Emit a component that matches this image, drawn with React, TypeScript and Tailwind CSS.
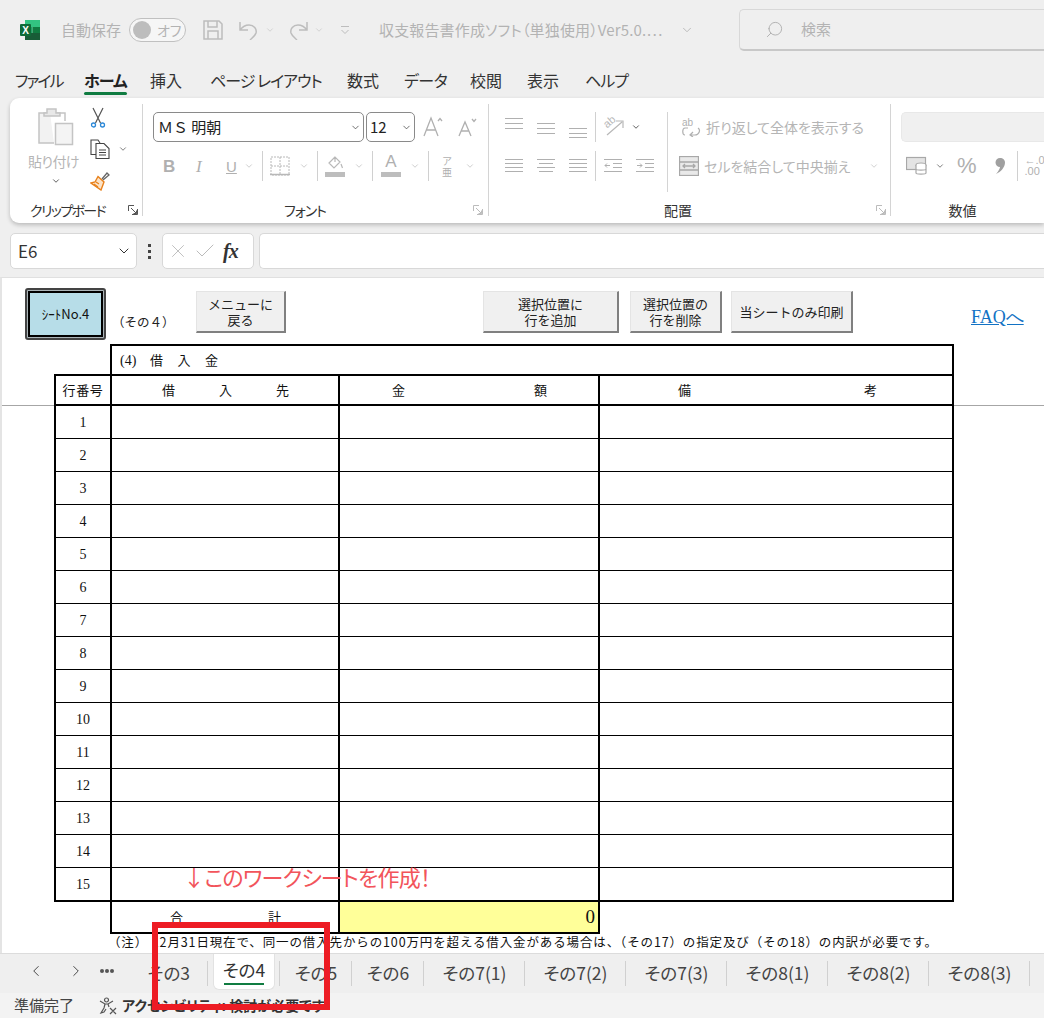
import type { ReactNode } from 'react'
import { ChevronDown, Search, X, Check, ChevronLeft, ChevronRight } from 'lucide-react'

const ROWS = Array.from({ length: 15 }, (_, i) => i + 1)
const TABS = [
  { label: 'その5', width: 'w-[72px]' },
  { label: 'その6', width: 'w-[72px]' },
  { label: 'その7(1)', width: 'w-[101px]' },
  { label: 'その7(2)', width: 'w-[101px]' },
  { label: 'その7(3)', width: 'w-[101px]' },
  { label: 'その8(1)', width: 'w-[101px]' },
  { label: 'その8(2)', width: 'w-[101px]' },
  { label: 'その8(3)', width: 'w-[101px]' },
]

function Chev({ className = 'text-[#b5b5b5]', size = 10 }: { className?: string; size?: number }) {
  return <ChevronDown size={size} strokeWidth={1.5} className={`shrink-0 ${className}`} />
}

function Lines({ y, widths, className = '' }: { y: number[]; widths?: number[]; className?: string }) {
  return (
    <svg width="18" height="18" viewBox="0 0 18 18" className={`shrink-0 ${className}`} stroke="#b0b0b0" strokeWidth="1">
      {y.map((v, i) => (
        <line key={v} x1={widths ? (18 - widths[i]) / 2 : 0} x2={widths ? (18 + widths[i]) / 2 : 18} y1={v + 0.5} y2={v + 0.5} />
      ))}
    </svg>
  )
}

function ExcelLogo() {
  return (
    <svg width="20" height="20" viewBox="0 0 20 20" className="shrink-0">
      <rect x="5" y="0" width="15" height="7" fill="#33c481" />
      <rect x="5" y="7" width="7.5" height="6" fill="#21a366" />
      <rect x="12.5" y="7" width="7.5" height="6" fill="#107c41" />
      <rect x="5" y="13" width="15" height="7" fill="#185c37" />
      <rect x="0" y="4" width="11" height="12" rx="1" fill="#0e6b38" />
      <text x="5.5" y="13.5" fontSize="10" fontWeight="700" fill="#fff" textAnchor="middle" fontFamily="Liberation Sans">X</text>
    </svg>
  )
}

function PasteIcon() {
  return (
    <svg width="36" height="38" viewBox="0 0 36 38" className="shrink-0" fill="none" stroke="#c4c4c4" strokeWidth="1.5">
      <path d="M12 5H1v30h15" fill="#f2f2f2" />
      <path d="M27 13V5H16" />
      <path d="M9 5V1h9v4h4v3H6V5z" fill="#e8e8e8" />
      <rect x="17.5" y="15.5" width="17" height="21" fill="#f4f4f4" />
    </svg>
  )
}

function ScissorsIcon() {
  return (
    <svg width="16" height="21" viewBox="0 0 16 21" className="shrink-0" fill="none">
      <path d="M3 1l7.5 15M13 1L5.500 16" stroke="#555" strokeWidth="1.200" />
      <circle cx="3.500" cy="18" r="2" stroke="#2b88d8" strokeWidth="1.300" />
      <circle cx="12.500" cy="18" r="2" stroke="#2b88d8" strokeWidth="1.300" />
    </svg>
  )
}

function CopyIcon() {
  return (
    <svg width="20" height="20" viewBox="0 0 20 20" className="shrink-0" fill="none" stroke="#444" strokeWidth="1.100">
      <path d="M8 15.500H1V1h7l2 3" />
      <path d="M6 4.500h8l5 5v10H6z" fill="#fff" />
      <path d="M9 11h7M9 13.500h7M9 16h7" />
    </svg>
  )
}

function BrushIcon() {
  return (
    <svg width="20" height="20" viewBox="0 0 20 20" className="shrink-0" fill="none">
      <path d="M12 8l5-6 2 2-6 5" stroke="#666" strokeWidth="1.300" />
      <path d="M8 5.500l6 5.500-3 8-10-7 4-1z" fill="#fbe3c8" stroke="#e8801a" strokeWidth="1.400" />
      <path d="M6 11l3 2M4 13l4 3" stroke="#e8801a" strokeWidth="1.200" />
    </svg>
  )
}

function Launcher({ dark = false }: { dark?: boolean }) {
  const color = dark ? '#555' : '#bcbcbc'
  return (
    <svg width="10" height="10" viewBox="0 0 10 10" className="shrink-0" fill="none" stroke={color} strokeWidth="1">
      <path d="M9.500 4V9.500H4M.5 6V.5H6M3 3l5.500 5.500M5.500 8.500h3v-3" />
    </svg>
  )
}

function RibbonLabel({ children, className = '' }: { children: ReactNode; className?: string }) {
  return <div className={`text-[14px] leading-[20px] h-[20px] text-[#333] whitespace-nowrap ${className}`}>{children}</div>
}

function Sep({ className = '' }: { className?: string }) {
  return <div className={`w-px h-[30px] bg-[#d0d0d0] shrink-0 ${className}`} />
}

function GrowA({ big, up }: { big: boolean; up: boolean }) {
  return (
    <svg width="20" height="22" viewBox="0 0 20 22" className="shrink-0" fill="none" stroke="#b0b0b0" strokeWidth="1.300">
      {big ? <path d="M1 20L8 2l7 18M3.500 14h9" /> : <path d="M2 20L8 6l6 14M4 15h8" />}
      <path d={up ? 'M15 5l2-2.500L19 5' : 'M15 3l2 2.500L19 3'} />
    </svg>
  )
}

function TitleBar() {
  return (
    <div className="flex items-center h-[60px] pl-[20px] text-[15px] text-[#b3b3b3]">
      <ExcelLogo />
      <span className="ml-[21px] w-[59px] whitespace-nowrap">自動保存</span>
      <div className="ml-[9px] w-[57px] h-[24px] rounded-full border border-[#c0c0c0] bg-[#f6f6f6] flex items-center pl-[3px]">
        <span className="w-[18px] h-[18px] rounded-full bg-[#bdbdbd]" />
        <span className="ml-[6px] text-[14px] leading-none whitespace-nowrap">オフ</span>
      </div>
      <svg width="20" height="20" viewBox="0 0 20 20" className="ml-[17px] shrink-0" fill="none" stroke="#bdbdbd" strokeWidth="1.500">
        <path d="M1 1h15l3 3v15H1z" />
        <path d="M5 1v6h9V1M5 19v-8h10v8" />
      </svg>
      <svg width="19" height="20" viewBox="0 0 19 20" className="ml-[16px] shrink-0" fill="none" stroke="#bdbdbd" strokeWidth="1.500">
        <path d="M1 2v8h8M1 10c3-4 6-5 9-5 5 0 8 4 7 8-1 3-4 5-6 7" />
      </svg>
      <Chev className="ml-[7px] text-[#c0c0c0]" />
      <svg width="19" height="20" viewBox="0 0 19 20" className="ml-[14px] shrink-0" fill="none" stroke="#bdbdbd" strokeWidth="1.500">
        <path d="M18 2v8h-8M18 10c-3-4-6-5-9-5-5 0-8 4-7 8 1 3 4 5 6 7" />
      </svg>
      <Chev className="ml-[6px] text-[#c0c0c0]" />
      <svg width="10" height="10" viewBox="0 0 10 10" className="ml-[16px] shrink-0" fill="none" stroke="#bdbdbd">
        <path d="M1 1.500h8M1.500 5l3.500 3.500L8.500 5" />
      </svg>
      <span className="ml-[29px] w-[288px] shrink-0 whitespace-nowrap tracking-[0.15px]">収支報告書作成ソフト（単独使用）Ver5.0.⋯</span>
      <Chev size={14} className="ml-[13px]" />
      <div className="ml-[45px] flex-1 h-[42px] rounded-l-[5px] border border-r-0 border-[#d8d8d8] border-b-[2px] border-b-[#c8c8c8] flex items-center pl-[25px]">
        <Search size={19} strokeWidth={1.200} className="-scale-x-100 text-[#b0b0b0]" />
        <span className="ml-[17px]">検索</span>
      </div>
    </div>
  )
}

function MenuBar() {
  const items = [
    { label: 'ファイル', cls: 'w-[69px] tracking-[-2px]' },
    { label: 'ホーム', cls: 'w-[66px] font-bold text-[#222] tracking-[-1px]', active: true },
    { label: '挿入', cls: 'w-[60px]' },
    { label: 'ページ レイアウト', cls: 'w-[137px] tracking-[-1px]' },
    { label: '数式', cls: 'w-[57px]' },
    { label: 'データ', cls: 'w-[66px] tracking-[-0.5px]' },
    { label: '校閲', cls: 'w-[57px]' },
    { label: '表示', cls: 'w-[58px]' },
    { label: 'ヘルプ', cls: 'w-[60px] tracking-[-1px]' },
  ]
  return (
    <div className="flex h-[38px] pl-[15px] text-[16px] text-[#333]">
      {items.map((m) => (
        <div key={m.label} className={`h-[38px] pt-[8px] leading-[24px] whitespace-nowrap ${m.cls}`}>
          <span className="relative inline-block h-[30px]">
            {m.label}
            {m.active && <span className="absolute left-0 right-0 top-[24px] h-[3px] rounded-sm bg-[#107c41]" />}
          </span>
        </div>
      ))}
    </div>
  )
}

function ClipboardGroup() {
  return (
    <div className="w-[133px] shrink-0 border-r border-[#d4d4d4] h-[112px]">
      <div className="flex h-[96px] pl-[17px]">
        <div className="w-[63px] flex flex-col items-center pt-[4px] pr-[5px]">
          <PasteIcon />
          <span className="mt-[6px] -ml-[5px] text-[14px] leading-[18px] text-[#b5b5b5] whitespace-nowrap tracking-[-0.6px]">貼り付け</span>
          <Chev className="mt-[6px]" />
        </div>
        <div className="flex flex-col items-start pt-[3px]">
          <ScissorsIcon />
          <div className="flex items-center mt-[11px]">
            <CopyIcon />
            <Chev className="ml-[8px] text-[#333]" />
          </div>
          <div className="mt-[12px]"><BrushIcon /></div>
        </div>
      </div>
      <div className="flex items-center pl-[20px]">
        <div className="w-[98px]"><RibbonLabel className="tracking-[-1.6px]">クリップボード</RibbonLabel></div>
        <Launcher dark />
      </div>
    </div>
  )
}

function FontGroup() {
  return (
    <div className="w-[346px] shrink-0 border-r border-[#d4d4d4] h-[112px]">
      <div className="h-[96px] pt-[8px]">
        <div className="flex items-center pl-[10px] h-[30px]">
          <div className="w-[211px] h-[30px] rounded-[5px] border border-[#8a8a8a] flex items-center pl-[4px] pr-[2px] justify-between text-[15px] text-[#222]">
            <span className="whitespace-nowrap [font-feature-settings:normal]">ＭＳ 明朝</span>
            <Chev size={11} className="text-[#333]" />
          </div>
          <div className="ml-[2px] w-[49px] h-[30px] rounded-[5px] border border-[#8a8a8a] flex items-center pl-[3px] pr-[2px] justify-between text-[15px] text-[#222]">
            <span>12</span>
            <Chev size={11} className="text-[#333]" />
          </div>
          <div className="ml-[8px]"><GrowA big up /></div>
          <div className="ml-[14px]"><GrowA big={false} up={false} /></div>
        </div>
        <div className="flex items-center h-[32px] mt-[8px] pl-[20px] text-[#b0b0b0]">
          <span className="w-[12px] text-[17px] font-bold leading-none font-['Liberation_Sans']">B</span>
          <span className="ml-[21px] w-[10px] text-[17px] italic leading-none font-['Liberation_Serif']">I</span>
          <span className="ml-[20px] w-[12px] text-[15px] underline leading-none font-['Liberation_Sans']">U</span>
          <Chev className="ml-[6px]" />
          <Sep className="ml-[8px]" />
          <svg width="20" height="20" viewBox="0 0 20 20" className="ml-[7px] shrink-0" fill="none" stroke="#b8b8b8">
            <rect x="1" y="1" width="18" height="18" strokeDasharray="2 1" />
            <path d="M10 1v18M1 10h18" strokeDasharray="2 1" />
            <path d="M0 18.500h20" strokeWidth="1.500" />
          </svg>
          <Chev className="ml-[9px]" />
          <Sep className="ml-[8px]" />
          <div className="ml-[7px] w-[20px] flex flex-col items-center">
            <svg width="18" height="14" viewBox="0 0 18 14" fill="none" stroke="#b8b8b8" strokeWidth="1.200">
              <path d="M9 1L3 7l5 5 6-6zM9 1V6M15 8l1.500 4" />
            </svg>
            <span className="mt-[2px] w-[20px] h-[5px] bg-[#bdbdbd]" />
          </div>
          <Chev className="ml-[9px]" />
          <Sep className="ml-[8px]" />
          <div className="ml-[8px] w-[20px] flex flex-col items-center">
            <span className="text-[17px] leading-[14px] font-['Liberation_Sans']">A</span>
            <span className="mt-[3px] w-[20px] h-[5px] bg-[#bdbdbd]" />
          </div>
          <Chev className="ml-[9px]" />
          <Sep className="ml-[8px]" />
          <div className="ml-[12px] w-[12px] flex flex-col items-center text-[10px] leading-[11px] whitespace-nowrap">
            <span>ア</span>
            <span>亜</span>
          </div>
          <Chev className="ml-[12px]" />
        </div>
      </div>
      <div className="flex items-center">
        <div className="w-[324px] text-center"><RibbonLabel className="tracking-[-1px]">フォント</RibbonLabel></div>
        <div className="ml-[6px]"><Launcher /></div>
      </div>
    </div>
  )
}

function AlignGroup() {
  return (
    <div className="w-[402px] shrink-0 border-r border-[#d4d4d4] h-[112px]">
      <div className="flex h-[96px] pt-[8px]">
        <div className="w-[179px] h-[80px] border-r border-[#d4d4d4] pl-[16px]">
          <div className="flex items-center h-[30px]">
            <Lines y={[4, 9, 14]} className="-mt-[8px]" />
            <Lines y={[6, 11, 16]} className="ml-[14px] -mt-[2px]" />
            <Lines y={[8, 13, 17]} className="ml-[14px] mt-[4px]" />
            <Sep className="ml-[8px]" />
            <svg width="22" height="24" viewBox="0 0 22 24" className="ml-[7px] shrink-0" fill="none" stroke="#b8b8b8" strokeWidth="1.200">
              <path d="M4 20L19 7M13 6h7v7" />
              <text x="1" y="11" fontSize="11" fill="#b8b8b8" stroke="none" transform="rotate(-40 6 8)" fontFamily="Liberation Sans">ab</text>
            </svg>
            <Chev className="ml-[6px]" />
          </div>
          <div className="flex items-center h-[32px] mt-[8px]">
            <Lines y={[2, 6, 10, 14]} />
            <Lines y={[2, 6, 10, 14]} widths={[18, 14, 18, 14]} className="ml-[14px]" />
            <Lines y={[2, 6, 10, 14]} className="ml-[14px]" />
            <Sep className="ml-[8px]" />
            <svg width="18" height="18" viewBox="0 0 18 18" className="ml-[8px] shrink-0" fill="none" stroke="#b0b0b0">
              <path d="M0 2.500h18M9 6.500h9M9 10.500h9M0 14.500h18M6 8.500H1M3 6.500l-2 2 2 2" />
            </svg>
            <svg width="18" height="18" viewBox="0 0 18 18" className="ml-[14px] shrink-0" fill="none" stroke="#b0b0b0">
              <path d="M0 2.500h18M9 6.500h9M9 10.500h9M0 14.500h18M1 8.500h5M4 6.500l2 2-2 2" />
            </svg>
          </div>
        </div>
        <div className="pl-[11px] text-[14px] text-[#b5b5b5]">
          <div className="flex items-center h-[30px]">
            <svg width="22" height="20" viewBox="0 0 22 20" className="shrink-0 ml-[2px]" fill="none" stroke="#b0b0b0" strokeWidth="1.200">
              <text x="1" y="9" fontSize="10" fill="#b0b0b0" stroke="none" fontFamily="Liberation Sans">ab</text>
              <path d="M7 11H4C1 11 1 18 4 18M17 11c3 2 1 7-3 7H9M12 15l-3 3 3 2" />
            </svg>
            <span className="ml-[3px] whitespace-nowrap">折り返して全体を表示する</span>
          </div>
          <div className="flex items-center h-[32px] mt-[8px]">
            <svg width="20" height="20" viewBox="0 0 20 20" className="shrink-0" fill="none" stroke="#a8a8a8" strokeWidth="1.300">
              <rect x=".5" y=".5" width="19" height="19" fill="#e9e9e9" />
              <path d="M.5 6h19M.5 14h19" />
              <path d="M4 10h12M6 8l-2 2 2 2M14 8l2 2-2 2" />
            </svg>
            <span className="ml-[5px] w-[165px] shrink-0 whitespace-nowrap">セルを結合して中央揃え</span>
            <Chev />
          </div>
        </div>
      </div>
      <div className="flex items-center">
        <div className="w-[378px] text-center"><RibbonLabel>配置</RibbonLabel></div>
        <div className="ml-[9px]"><Launcher /></div>
      </div>
    </div>
  )
}

function NumberGroup() {
  return (
    <div className="flex-1 h-[112px]">
      <div className="h-[96px] pt-[8px] pl-[10px]">
        <div className="h-[30px] rounded-l-[5px] bg-[#f0f0f0] border border-r-0 border-[#e8e8e8]" />
        <div className="flex items-center h-[32px] mt-[8px] pl-[5px] text-[#b0b0b0]">
          <svg width="21" height="20" viewBox="0 0 21 20" className="shrink-0" fill="none" stroke="#a8a8a8" strokeWidth="1.200">
            <rect x=".5" y="1.500" width="19" height="12" fill="#e4e4e4" />
            <ellipse cx="15" cy="9" rx="5" ry="2" fill="#fff" />
            <path d="M10 9v8c0 1.500 10 1.500 10 0V9M10 13c0 1.500 10 1.500 10 0" fill="#fff" />
          </svg>
          <Chev className="ml-[8px] text-[#333]" />
          <span className="ml-[12px] text-[22px] leading-none font-['Liberation_Sans']">%</span>
          <svg width="10" height="16" viewBox="0 0 10 16" className="ml-[18px] shrink-0">
            <path d="M5 0c3 0 5 2 5 4.500C10 9 6 14 1 16c2-2.500 4-5 4-7C2.500 9 .5 7 .5 4.500S2.500 0 5 0z" fill="#a0a0a0" />
          </svg>
          <Sep className="ml-[12px]" />
          <div className="ml-[7px] w-[20px] text-[11px] leading-[11px] whitespace-nowrap font-['Liberation_Sans']">
            <div>←.0</div>
            <div>.00</div>
          </div>
        </div>
      </div>
      <div className="w-[143px] text-center"><RibbonLabel>数値</RibbonLabel></div>
    </div>
  )
}

function FormulaBar() {
  return (
    <div className="flex items-stretch h-[36px] mt-[10px] pl-[10px]">
      <div className="w-[127px] rounded-[5px] border border-[#d8d8d8] bg-white flex items-center justify-between pl-[7px] pr-[4px] text-[17px] text-[#333]">
        <span>E6</span>
        <ChevronDown size={16} strokeWidth={1.500} className="text-[#333]" />
      </div>
      <div className="w-[25px] flex flex-col items-center justify-center gap-[3px]">
        <span className="w-[3px] h-[3px] bg-[#444]" />
        <span className="w-[3px] h-[3px] bg-[#444]" />
        <span className="w-[3px] h-[3px] bg-[#444]" />
      </div>
      <div className="w-[92px] rounded-[5px] border border-[#d8d8d8] bg-white flex items-center pl-[4px]">
        <X size={22} strokeWidth={1} className="text-[#bbb]" />
        <Check size={24} strokeWidth={1} className="ml-[4px] text-[#bbb]" />
        <span className="ml-[6px] text-[20px] italic font-bold font-['Liberation_Serif'] text-[#333] tracking-[-1px]">fx</span>
      </div>
      <div className="ml-[5px] flex-1 rounded-l-[5px] border border-r-0 border-[#d8d8d8] bg-white" />
    </div>
  )
}

function SheetButton({ children, className }: { children: ReactNode; className: string }) {
  return (
    <div className={`h-[42px] shrink-0 bg-[#f0f0f0] border-r-2 border-b-2 border-r-[#808080] border-b-[#808080] border-t border-l border-t-[#e4e4e4] border-l-[#e4e4e4] flex flex-col items-center justify-center text-[13px] leading-[16px] text-[#222] ${className}`}>
      {children}
    </div>
  )
}

function SheetHeader() {
  return (
    <div className="flex items-start h-[66px] pt-[10px] pl-[25px]">
      <div className="w-[81px] h-[52px] shrink-0 rounded-[3px] border-2 border-[#444] bg-[#aab4b8] p-[1px]">
        <div className="h-full border-2 border-black bg-[#b7dde8] flex items-center justify-center text-[13px] text-[#111] whitespace-nowrap">
          ｼｰﾄNo.4
        </div>
      </div>
      <span className="ml-[6px] mt-[25px] w-[84px] shrink-0 text-[12.500px] leading-[18px] text-[#222] whitespace-nowrap">（その４）</span>
      <SheetButton className="w-[90px] mt-[3px]"><span>メニューに</span><span>戻る</span></SheetButton>
      <SheetButton className="w-[136px] mt-[3px] ml-[197px]"><span>選択位置に</span><span>行を追加</span></SheetButton>
      <SheetButton className="w-[92px] mt-[3px] ml-[11px]"><span>選択位置の</span><span>行を削除</span></SheetButton>
      <SheetButton className="w-[122px] mt-[3px] ml-[9px]"><span>当シートのみ印刷</span></SheetButton>
      <a className="ml-[118px] mt-[18px] text-[18px] leading-[22px] text-[#1272c4] underline font-['Liberation_Serif'] whitespace-nowrap">FAQへ</a>
    </div>
  )
}

function LedgerTable() {
  const cell = 'border-l-2 border-black'
  return (
    <div className="relative ml-[54px] w-[900px] grid grid-cols-[56px_228px_260px_356px] grid-rows-[30px_30px_34px_repeat(14,33px)_34px] text-[13px] text-[#111]">
      <div />
      <div className={`col-span-3 ${cell} border-t-2 border-r-2 flex items-center pl-[8px] whitespace-nowrap`}>
        <span className="font-['Liberation_Serif'] text-[14px] w-[30px]">(4)</span>
        <span className="tracking-[14.5px]">借入金</span>
      </div>

      <div className={`${cell} border-t-2 flex items-center justify-center tracking-[0.6px]`}>行番号</div>
      <div className={`${cell} border-t-2 flex items-center justify-between pl-[50px] pr-[49px]`}>
        <span>借</span><span>入</span><span>先</span>
      </div>
      <div className={`${cell} border-t-2 flex items-center justify-between pl-[52px] pr-[51px]`}>
        <span>金</span><span>額</span>
      </div>
      <div className={`${cell} border-t-2 border-r-2 flex items-center justify-between pl-[78px] pr-[75px]`}>
        <span>備</span><span>考</span>
      </div>

      {ROWS.map((n) => (
        <div key={n} className="contents">
          <div className={`${cell} ${n === 1 ? 'border-t-2' : 'border-t'} flex items-center justify-center font-['Liberation_Serif'] text-[14px]`}>{n}</div>
          <div className={`${cell} ${n === 1 ? 'border-t-2' : 'border-t'}`} />
          <div className={`${cell} ${n === 1 ? 'border-t-2' : 'border-t'}`} />
          <div className={`${cell} ${n === 1 ? 'border-t-2' : 'border-t'} border-r-2`} />
        </div>
      ))}

      <div className="border-t-2 border-black" />
      <div className={`${cell} border-t-2 border-b-2 flex items-start justify-between pl-[58px] pr-[57px] pt-[5px]`}>
        <span>合</span><span>計</span>
      </div>
      <div className={`${cell} border-t-2 border-b-2 bg-[#ffff99] flex items-center justify-end pr-[3px] text-[19px] font-['Liberation_Serif']`}>0</div>
      <div className="border-t-2 border-l-2 border-black" />
    </div>
  )
}

function Sheet() {
  return (
    <div className="relative mt-[8px] h-[676px] bg-white border-t border-[#e0e0e0] border-l-2 border-l-[#e4e4e4] overflow-hidden [font-feature-settings:normal]">
      <div className="absolute left-0 right-0 top-[127px] h-px bg-[#a6a6a6]" />
      <div className="-ml-[2px]">
        <SheetHeader />
        <LedgerTable />
        <div className="ml-[108px] text-[12.500px] leading-[16px] tracking-[0.87px] text-[#111] whitespace-nowrap">
          （注） 12月31日現在で、同一の借入先からの100万円を超える借入金がある場合は、（その17）の指定及び（その18）の内訳が必要です。
        </div>
      </div>
    </div>
  )
}

function TabBar() {
  return (
    <div className="flex h-[40px] bg-[#efefef] border-t border-[#dcdcdc] text-[17.500px] text-[#444] overflow-hidden">
      <div className="w-[134px] shrink-0 flex items-center pl-[27px] pb-[5px]">
        <ChevronLeft size={18} strokeWidth={1.300} className="text-[#444]" />
        <ChevronRight size={18} strokeWidth={1.300} className="ml-[22px] text-[#444]" />
        <div className="ml-[15px] flex gap-[1px]">
          <span className="w-[4px] h-[4px] rounded-full bg-[#555]" />
          <span className="w-[4px] h-[4px] rounded-full bg-[#555]" />
          <span className="w-[4px] h-[4px] rounded-full bg-[#555]" />
        </div>
      </div>
      <div className="w-[73px] shrink-0 flex items-center justify-end pr-[17px] pb-[1px]">その3</div>
      <div className="w-px h-[25px] bg-[#d0d0d0] mt-[7px] shrink-0" />
      <div className="relative ml-[5px] w-[62px] h-[36px] shrink-0 bg-white rounded-b-[6px] border border-t-0 border-[#e2e2e2] text-center leading-[32px] text-[#333]">
        その4
        <span className="absolute left-[10px] right-[10px] top-[29px] h-[2px] bg-[#107c41]" />
      </div>
      <div className="ml-[4px] w-px h-[25px] bg-[#d0d0d0] mt-[7px] shrink-0" />
      {TABS.map((t) => (
        <div key={t.label} className={`${t.width} shrink-0 flex items-center justify-center h-[38px] relative`}>
          {t.label}
          <span className="absolute right-0 top-[7px] w-px h-[25px] bg-[#d0d0d0]" />
        </div>
      ))}
    </div>
  )
}

function StatusBar() {
  return (
    <div className="flex items-center h-[25px] bg-[#f3f3f3] pl-[14px] text-[15px] text-[#444]">
      <span className="w-[60px] whitespace-nowrap">準備完了</span>
      <svg width="18" height="18" viewBox="0 0 18 18" className="ml-[25px] shrink-0" fill="none" stroke="#555" strokeWidth="1.200">
        <circle cx="7.500" cy="3" r="2" />
        <path d="M1 4l5 3h3l5-3M6 7L5 11l-3 5 3-1 2-3M9 7l1 3M11 11l6 6M17 11l-6 6" />
      </svg>
      <span className="ml-[5px] text-[14px] font-bold text-[#333] whitespace-nowrap">アクセシビリティ: 検討が必要です</span>
    </div>
  )
}

export default function App() {
  return (
    <div className="relative w-[1044px] h-[1018px] overflow-hidden bg-[#efefef] font-['Noto_Sans_CJK_JP','Noto_Sans',sans-serif] [font-feature-settings:'palt']">
      <TitleBar />
      <MenuBar />
      <div className="ml-[10px] h-[125px] rounded-l-[9px] bg-white pt-[6px] shadow-[0_2px_4px_rgba(0,0,0,0.22)] flex">
        <ClipboardGroup />
        <FontGroup />
        <AlignGroup />
        <NumberGroup />
      </div>
      <FormulaBar />
      <Sheet />
      <TabBar />
      <StatusBar />

      {/* annotation drawn over the screenshot */}
      <div className="absolute left-[183px] top-[858px] text-[22px] leading-[36px] tracking-[-0.8px] text-[#f2545b] whitespace-nowrap">
        ↓このワークシートを作成！
      </div>
      <div className="absolute left-[152px] top-[922px] w-[178px] h-[88px] border-[6px] border-[#ed1c24]" />
    </div>
  )
}
